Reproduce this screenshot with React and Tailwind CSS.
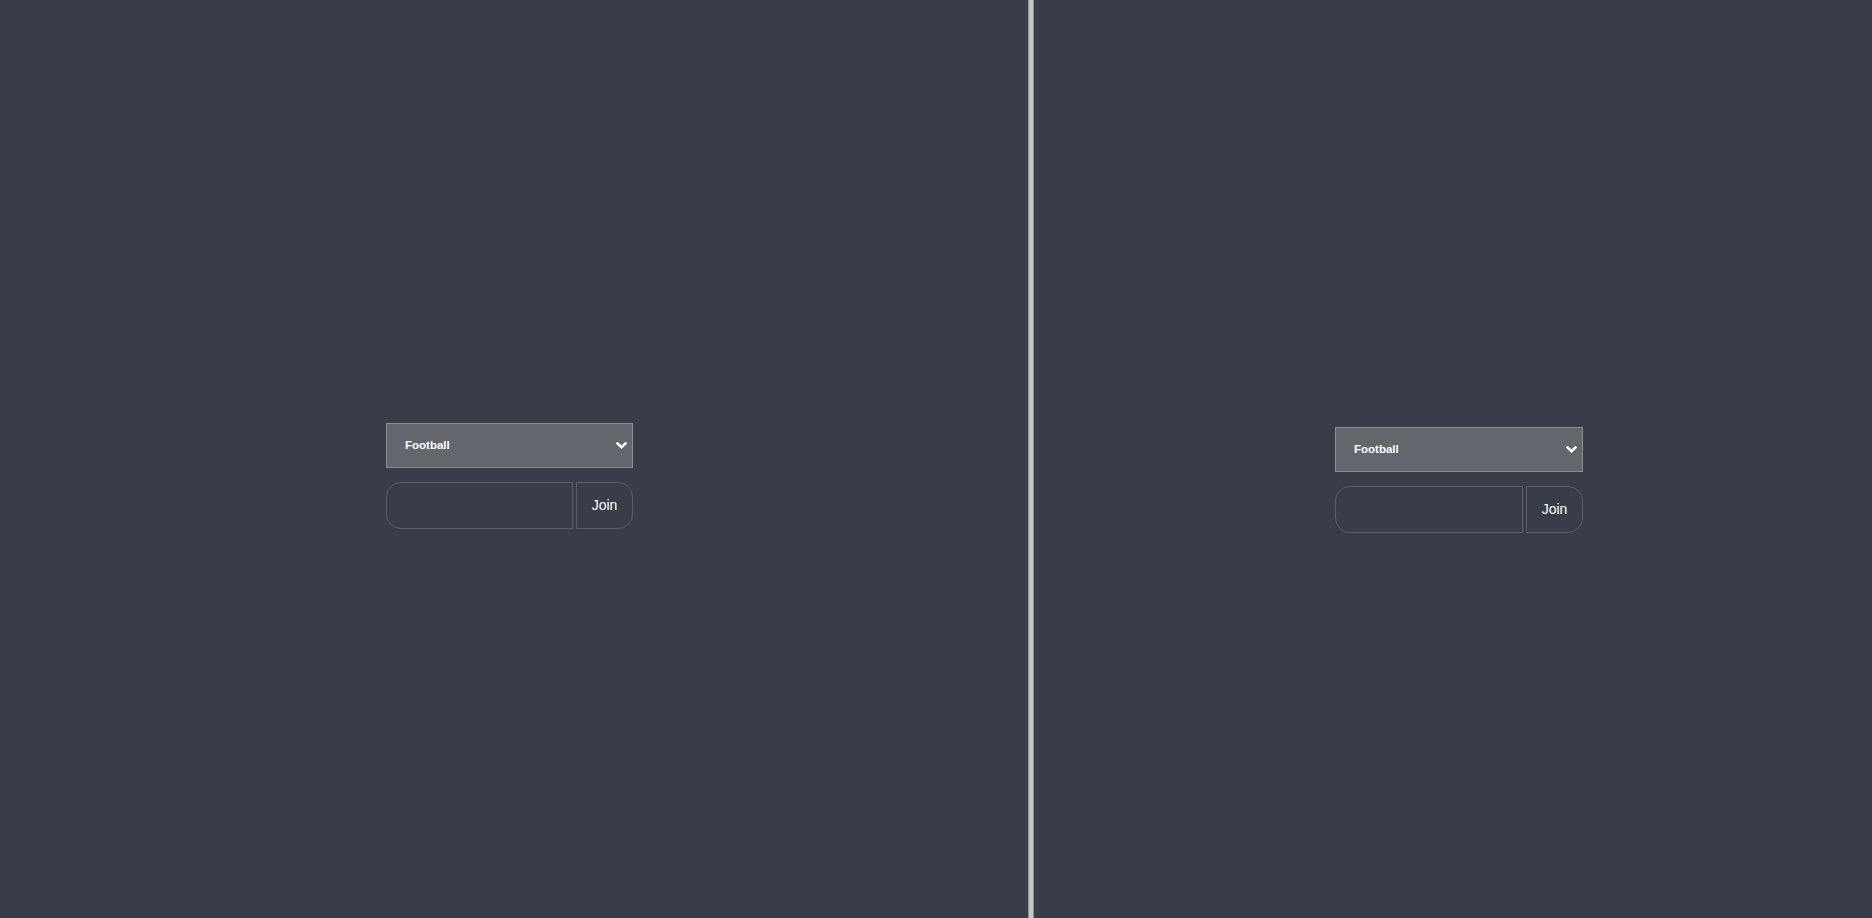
import React from "react";

function Panel({ w }) {
  return (
    <div className={`flex flex-col ${w}`}>
      <div className="relative w-full h-[45px] bg-[#63666c] border border-[#8b8d91] flex items-center pl-[18px]">
        <span className="text-[11.5px] text-white font-bold" style={{ fontFamily: '"Liberation Sans", Arial, sans-serif' }}>Football</span>
        <svg className="absolute right-[5px] top-[18px]" width="11" height="8" viewBox="0 0 11 8">
          <path d="M1.5 1.5 L5.5 5.3 L9.5 1.5" fill="none" stroke="#ffffff" strokeWidth="2.6" strokeLinecap="square" />
        </svg>
      </div>
      <div className="flex mt-[14px] gap-[3px] h-[47px]">
        <div className="flex-1 h-full border border-[#5b5f68] rounded-l-[15px]" />
        <div className="w-[57px] h-full border border-[#5b5f68] rounded-r-[15px] flex items-center justify-center">
          <span className="text-[14px] text-white" style={{ fontFamily: '"Liberation Sans", Arial, sans-serif' }}>Join</span>
        </div>
      </div>
    </div>
  );
}

export default function App() {
  return (
    <div className="flex w-[1872px] h-[918px] bg-[#393d47] overflow-hidden">
      <div className="w-[1028px] h-full pl-[386px] pt-[423px]">
        <Panel w="w-[247px]" />
      </div>
      <div className="w-[6px] h-full bg-[#c6c6c6] border-x border-[#8f9095]" />
      <div className="flex-1 h-full pl-[301px] pt-[427px]">
        <Panel w="w-[248px]" />
      </div>
    </div>
  );
}
